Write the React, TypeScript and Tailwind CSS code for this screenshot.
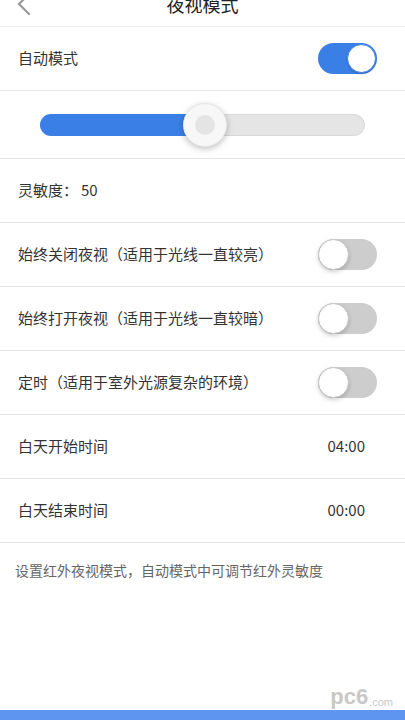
import React from 'react';

function Toggle({ on }: { on: boolean }) {
  return on ? (
    <div className="w-[59px] h-[31px] rounded-full bg-[#3a7fe6] flex items-center justify-end p-[1px]">
      <div className="w-[29px] h-[29px] rounded-full bg-white border border-[#3a7fe6] shadow-[0_1px_2px_rgba(0,0,0,0.2)]" />
    </div>
  ) : (
    <div className="w-[59px] h-[31px] rounded-full bg-[#cdcdcd] flex items-center justify-start">
      <div className="w-[31px] h-[31px] rounded-full bg-white border border-[#c4c4c4] shadow-[0_2px_4px_rgba(0,0,0,0.18)]" />
    </div>
  );
}

function Row({ label, children }: { label: string; children?: React.ReactNode }) {
  return (
    <div className="h-[64px] flex items-center justify-between pl-[18px] pr-[28px] border-b border-[#e6e6e6]">
      <span className="text-[15px] text-[#333]">{label}</span>
      {children}
    </div>
  );
}

export default function App() {
  const font = { fontFamily: '"Noto Sans CJK SC", "Noto Sans", sans-serif' };
  return (
    <div className="w-[405px] h-[720px] bg-white flex flex-col overflow-hidden" style={font}>
      {/* header, scrolled so only its bottom shows */}
      <div className="h-[27px] overflow-hidden border-b border-[#ececec] shrink-0">
        <div className="-mt-[18px] h-[44px] flex items-center relative">
          <svg className="absolute left-[16px] top-[10px]" width="16" height="24" viewBox="0 0 16 24">
            <path d="M13 2 L3 12 L13 22" fill="none" stroke="#999" strokeWidth="2.2" strokeLinecap="round" />
          </svg>
          <div className="flex-1 text-center text-[18px] text-[#222]">夜视模式</div>
        </div>
      </div>

      <Row label="自动模式">
        <Toggle on />
      </Row>

      <div className="h-[68px] flex items-center px-[40px] border-b border-[#e6e6e6]">
        <div className="relative w-full h-[22px] flex rounded-full overflow-visible">
          <div className="w-[165px] h-full bg-[#3a7fe6] rounded-l-full" />
          <div className="flex-1 h-full bg-[#e5e5e5] border border-[#d8d8d8] rounded-r-full" />
          <div className="absolute left-[143px] top-1/2 -translate-y-1/2 w-[44px] h-[44px] rounded-full bg-[#f7f7f7] border border-[#e8e8e8] shadow-[0_2px_6px_rgba(0,0,0,0.25)] flex items-center justify-center">
            <div className="w-[20px] h-[20px] rounded-full bg-[#e4e4e4]" />
          </div>
        </div>
      </div>

      <div className="h-[64px] flex items-center pl-[18px] border-b border-[#e6e6e6] text-[15px] text-[#333]">
        <span>灵敏度：</span>
        <span className="ml-[3px]">50</span>
      </div>

      <Row label="始终关闭夜视（适用于光线一直较亮）">
        <Toggle on={false} />
      </Row>
      <Row label="始终打开夜视（适用于光线一直较暗）">
        <Toggle on={false} />
      </Row>
      <Row label="定时（适用于室外光源复杂的环境）">
        <Toggle on={false} />
      </Row>
      <div className="h-[64px] flex items-center justify-between pl-[18px] pr-[40px] border-b border-[#e6e6e6]">
        <span className="text-[15px] text-[#333]">白天开始时间</span>
        <span className="text-[15px] text-[#333]">04:00</span>
      </div>
      <div className="h-[64px] flex items-center justify-between pl-[18px] pr-[40px] border-b border-[#e6e6e6]">
        <span className="text-[15px] text-[#333]">白天结束时间</span>
        <span className="text-[15px] text-[#333]">00:00</span>
      </div>

      <div className="pl-[15px] pt-[17px] text-[14px] text-[#666]">设置红外夜视模式，自动模式中可调节红外灵敏度</div>

      <div className="flex-1 flex items-end justify-end pr-[12px] pb-[2px]">
        <div className="flex items-end text-[#c8c8c8]" style={{ fontFamily: '"Liberation Sans", sans-serif' }}>
          <span className="text-[22px] leading-none font-bold">pc6</span>
          <span className="text-[11px] leading-none ml-[1px]">.com</span>
        </div>
      </div>
      <div className="h-[10px] bg-[#5e95f0] shrink-0" />
    </div>
  );
}
